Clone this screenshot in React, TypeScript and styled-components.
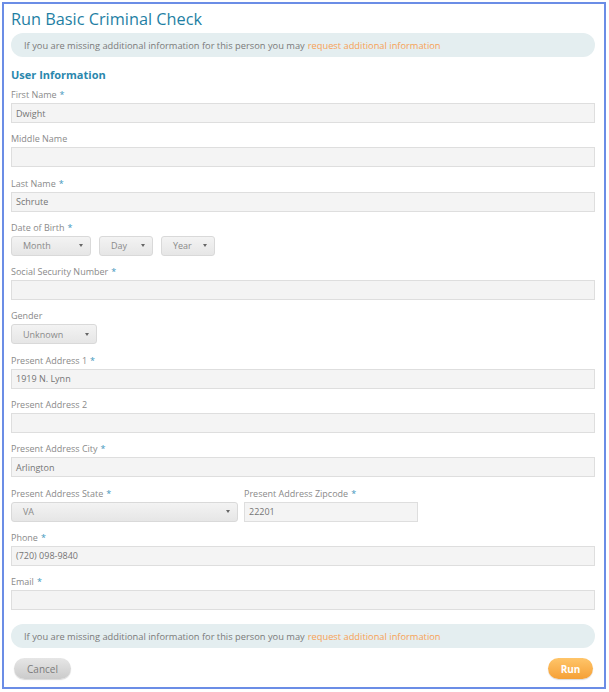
import React from "react";
import styled, { createGlobalStyle } from "styled-components";

const Global = createGlobalStyle`
  html, body { margin: 0; padding: 0; background: #fff; }
  body { font-family: "Open Sans", "Noto Sans", Arial, sans-serif; }
  * { box-sizing: border-box; }
`;

const Outer = styled.div`
  padding: 2px 3px 3px 2px;
  width: 609px;
`;

const Frame = styled.div`
  border: 2px solid #6b8de6;
  padding: 4px 9px 8px 7px;
  display: flex;
  flex-direction: column;
`;

const Title = styled.h1`
  margin: 0;
  font-size: 16.3px;
  line-height: 23px;
  font-weight: 400;
  color: #1f7fa4;
`;

const Banner = styled.div<{ $mt: number }>`
  margin-top: ${(p) => p.$mt}px;
  height: 24px;
  border-radius: 12px;
  background: #e4eef0;
  display: flex;
  align-items: center;
  padding-left: 13px;
  font-size: 9.3px;
  color: #7a7a7a;
`;

const Link = styled.span`
  color: #f7a155;
  margin-left: 3px;
`;

const Section = styled.h2`
  margin: 10px 0 0;
  font-size: 11px;
  line-height: 16px;
  font-weight: 700;
  color: #2a87ad;
`;

const Fields = styled.div`
  margin-top: 5px;
  display: flex;
  flex-direction: column;
  gap: 9.3px;
`;

const Field = styled.div`
  display: flex;
  flex-direction: column;
`;

const Label = styled.label`
  font-size: 9px;
  line-height: 14px;
  color: #8a8a8a;
  margin-bottom: 1px;
`;

const Star = styled.span`
  color: #3f97bd;
  margin-left: 3px;
`;

const Input = styled.div<{ $w?: number }>`
  height: 20px;
  width: ${(p) => (p.$w ? `${p.$w}px` : "100%")};
  background: #f4f4f4;
  border: 1px solid #dedede;
  display: flex;
  align-items: center;
  padding-left: 4px;
  font-size: 9px;
  color: #757575;
`;

const SelectRow = styled.div`
  display: flex;
  gap: 8px;
`;

const Select = styled.div<{ $w: number }>`
  height: 20px;
  width: ${(p) => p.$w}px;
  border: 1px solid #d9d9d9;
  border-radius: 3px;
  background: linear-gradient(#f3f3f3, #e6e6e6);
  display: flex;
  align-items: center;
  justify-content: space-between;
  padding: 0 7px 0 11px;
  font-size: 9px;
  color: #8a8a8a;
`;

const Caret = styled.span`
  width: 0;
  height: 0;
  border-left: 2.5px solid transparent;
  border-right: 2.5px solid transparent;
  border-top: 3px solid #666;
`;

const Pair = styled.div`
  display: grid;
  grid-template-columns: 227px 174px;
  gap: 6px;
`;

const Actions = styled.div`
  margin-top: 10px;
  display: flex;
  justify-content: space-between;
  padding: 0 2px 0 3px;
`;

const Button = styled.button<{ $primary?: boolean; $w: number }>`
  width: ${(p) => p.$w}px;
  height: 21px;
  border-radius: 11px;
  border: none;
  font-family: "Open Sans", Arial, sans-serif;
  font-size: 10px;
  font-weight: ${(p) => (p.$primary ? 700 : 400)};
  color: ${(p) => (p.$primary ? "#fff" : "#7b7b7b")};
  background: ${(p) =>
    p.$primary
      ? "linear-gradient(#ffc56a, #f5a036)"
      : "linear-gradient(#e6e6e6, #cbcbcb)"};
  box-shadow: 0 1px 1px rgba(0, 0, 0, 0.15);
  padding: 0;
`;

const InfoBanner = ({ mt }: { mt: number }) => (
  <Banner $mt={mt}>
    If you are missing additional information for this person you may
    <Link>request additional information</Link>
  </Banner>
);

const Lbl = ({ text, req }: { text: string; req?: boolean }) => (
  <Label>
    {text}
    {req && <Star>*</Star>}
  </Label>
);

const TextField = ({ label, req, value }: { label: string; req?: boolean; value?: string }) => (
  <Field>
    <Lbl text={label} req={req} />
    <Input>{value}</Input>
  </Field>
);

const Sel = ({ w, text }: { w: number; text: string }) => (
  <Select $w={w}>
    <span>{text}</span>
    <Caret />
  </Select>
);

export default function App() {
  return (
    <Outer>
      <Global />
      <Frame>
        <Title>Run Basic Criminal Check</Title>
        <InfoBanner mt={2} />
        <Section>User Information</Section>
        <Fields>
          <TextField label="First Name" req value="Dwight" />
          <TextField label="Middle Name" />
          <TextField label="Last Name" req value="Schrute" />
          <Field>
            <Lbl text="Date of Birth" req />
            <SelectRow>
              <Sel w={80} text="Month" />
              <Sel w={54} text="Day" />
              <Sel w={54} text="Year" />
            </SelectRow>
          </Field>
          <TextField label="Social Security Number" req />
          <Field>
            <Lbl text="Gender" />
            <SelectRow>
              <Sel w={86} text="Unknown" />
            </SelectRow>
          </Field>
          <TextField label="Present Address 1" req value="1919 N. Lynn" />
          <TextField label="Present Address 2" />
          <TextField label="Present Address City" req value="Arlington" />
          <Pair>
            <Field>
              <Lbl text="Present Address State" req />
              <Sel w={227} text="VA" />
            </Field>
            <Field>
              <Lbl text="Present Address Zipcode" req />
              <Input>22201</Input>
            </Field>
          </Pair>
          <TextField label="Phone" req value="(720) 098-9840" />
          <TextField label="Email" req />
        </Fields>
        <InfoBanner mt={14} />
        <Actions>
          <Button $w={57}>Cancel</Button>
          <Button $w={45} $primary>
            Run
          </Button>
        </Actions>
      </Frame>
    </Outer>
  );
}
